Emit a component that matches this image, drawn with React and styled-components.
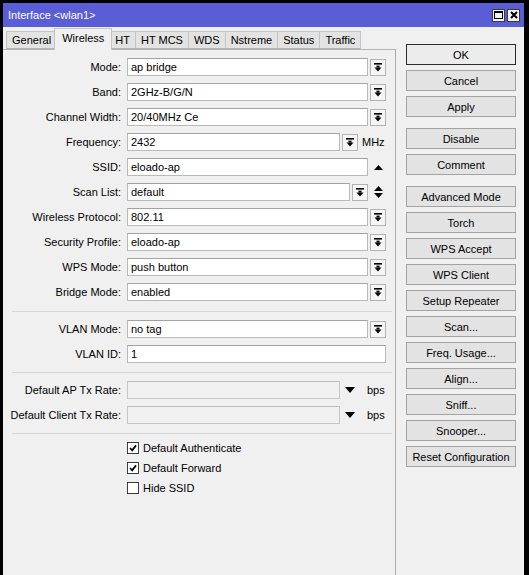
import React from 'react';
import styled, { createGlobalStyle } from 'styled-components';

const GlobalStyle = createGlobalStyle`
  html, body {
    margin: 0;
    padding: 0;
    background: #000;
  }
`;

const Screen = styled.div`
  width: 529px;
  height: 575px;
  box-sizing: border-box;
  padding: 3px 5px 0 3px;
  background: #000;
  font-family: "Liberation Sans", Arial, sans-serif;
  font-size: 11px;
  color: #000;
`;

const Window = styled.div`
  height: 100%;
  display: flex;
  flex-direction: column;
  background: #f0f0f0;
`;

const TitleBar = styled.div`
  height: 24px;
  flex: none;
  display: flex;
  align-items: center;
  justify-content: space-between;
  padding: 0 4px 0 5px;
  background: #5a5ed6;
`;

const TitleText = styled.span`
  color: #fff;
  font-size: 11px;
`;

const TitleButtons = styled.div`
  display: flex;
  gap: 2px;
`;

const TitleButton = styled.div`
  width: 13px;
  height: 13px;
  box-sizing: border-box;
  border: 1px solid #3a3a3a;
  background: #f2f2f2;
  display: flex;
  align-items: center;
  justify-content: center;
`;

const Body = styled.div`
  flex: 1;
  display: flex;
  min-height: 0;
`;

const LeftColumn = styled.div`
  width: 393px;
  flex: none;
  display: flex;
  flex-direction: column;
`;

const TabRow = styled.div`
  height: 21px;
  margin-top: 1px;
  padding-left: 4px;
  display: flex;
  align-items: flex-end;
  position: relative;
  z-index: 1;
`;

const Tab = styled.div`
  box-sizing: border-box;
  height: ${p => (p.$selected ? '22px' : '18px')};
  margin: ${p => (p.$selected ? '0 -2px -1px -3px' : '0 0 0 -1px')};
  padding: ${p => (p.$selected ? '0 7px 3px' : '0 5px')};
  border: 1px solid #c4c4c4;
  border-bottom: ${p => (p.$selected ? 'none' : '1px solid #b4b4b4')};
  background: ${p => (p.$selected ? '#f0f0f0' : '#e3e3e3')};
  display: flex;
  align-items: center;
  white-space: nowrap;
  position: relative;
  z-index: ${p => (p.$selected ? 2 : 0)};
`;

const Pane = styled.div`
  flex: 1;
  border-top: 1px solid #b4b4b4;
  border-right: 1px solid #a8a8a8;
`;

const Section = styled.div`
  display: flex;
  flex-direction: column;
  gap: ${p => p.$gap}px;
  padding: ${p => p.$pt}px 0 ${p => p.$pb}px;
`;

const Divider = styled.div`
  margin: 0 3px 0 9px;
  border-top: 1px solid #d6d6d6;
`;

const Row = styled.div`
  display: grid;
  grid-template-columns: 118px 259px;
  column-gap: 6px;
  align-items: center;
  height: ${p => p.$h || 18}px;
`;

const Label = styled.div`
  text-align: right;
  white-space: nowrap;
`;

const Field = styled.div`
  display: flex;
  align-items: center;
  gap: 2px;
  height: 18px;
`;

const TextBox = styled.div`
  flex: 1;
  min-width: 0;
  height: 18px;
  box-sizing: border-box;
  padding: 0 3px;
  line-height: 16px;
  white-space: nowrap;
  overflow: hidden;
  border: 1px solid ${p => (p.$disabled ? '#c6c6c6' : '#b9b9b9')};
  border-top-color: ${p => (p.$disabled ? '#bdbdbd' : '#a2a2a2')};
  background: ${p => (p.$disabled ? '#f0f0f0' : '#fff')};
`;

const DropButton = styled.div`
  width: 16px;
  height: 17px;
  flex: none;
  box-sizing: border-box;
  border: 1px solid #b3b3b3;
  background: #f6f6f6;
  display: flex;
  align-items: center;
  justify-content: center;
`;

const Suffix = styled.div`
  width: 16px;
  flex: none;
  display: flex;
  align-items: center;
  justify-content: center;
`;

const Unit = styled.div`
  width: 26px;
  flex: none;
  box-sizing: border-box;
  padding-left: ${p => p.$pad}px;
  white-space: nowrap;
`;

const CheckRow = styled.label`
  display: flex;
  align-items: center;
  gap: 4px;
  height: 20px;
  white-space: nowrap;
`;

const CheckBox = styled.span`
  width: 12px;
  height: 12px;
  box-sizing: border-box;
  border: 1px solid #3c3c3c;
  background: #fff;
  display: flex;
  align-items: center;
  justify-content: center;
`;

const ButtonColumn = styled.div`
  flex: 1;
  display: flex;
  flex-direction: column;
  padding: 17px 0 0 10px;
`;

const ActionButton = styled.div`
  width: 110px;
  height: 21px;
  box-sizing: border-box;
  margin-top: ${p => (p.$first ? 0 : p.$group ? 11 : 5)}px;
  border: 1px solid ${p => (p.$default ? '#2b2b2b' : '#a3a3a3')};
  background: ${p => (p.$default ? '#ececec' : '#e3e3e3')};
  display: flex;
  align-items: center;
  justify-content: center;
  white-space: nowrap;
`;

const DropIcon = () => (
  <svg width="8" height="9" viewBox="0 0 8 9">
    <rect x="0" y="0" width="8" height="1.6" fill="#000" />
    <rect x="2.5" y="2.6" width="3" height="2" fill="#000" />
    <polygon points="0.5,4.4 7.5,4.4 4,8.4" fill="#000" />
  </svg>
);

const UpIcon = () => (
  <svg width="9" height="5" viewBox="0 0 9 5">
    <polygon points="0,5 9,5 4.5,0" fill="#000" />
  </svg>
);

const UpDownIcon = () => (
  <svg width="9" height="12" viewBox="0 0 9 12">
    <polygon points="0,5 9,5 4.5,0" fill="#000" />
    <polygon points="0,7 9,7 4.5,12" fill="#000" />
  </svg>
);

const DownIcon = () => (
  <svg width="10" height="6" viewBox="0 0 10 6">
    <polygon points="0,0 10,0 5,6" fill="#000" />
  </svg>
);

const CheckIcon = () => (
  <svg width="8" height="8" viewBox="0 0 8 8">
    <path d="M1 4 L3.2 6.4 L7 1.4" stroke="#000" strokeWidth="1.8" fill="none" />
  </svg>
);

const MaxIcon = () => (
  <svg width="9" height="8" viewBox="0 0 9 8">
    <rect x="0.5" y="0.5" width="8" height="7" stroke="#000" fill="none" />
    <rect x="0" y="0" width="9" height="2" fill="#000" />
  </svg>
);

const CloseIcon = () => (
  <svg width="8" height="8" viewBox="0 0 8 8">
    <path d="M1 1 L7 7 M7 1 L1 7" stroke="#000" strokeWidth="2" />
  </svg>
);

const tabs = ['General', 'Wireless', 'HT', 'HT MCS', 'WDS', 'Nstreme', 'Status', 'Traffic'];

const mainRows = [
  { label: 'Mode', value: 'ap bridge', drop: true },
  { label: 'Band', value: '2GHz-B/G/N', drop: true },
  { label: 'Channel Width', value: '20/40MHz Ce', drop: true },
  { label: 'Frequency', value: '2432', drop: true, unit: 'MHz' },
  { label: 'SSID', value: 'eloado-ap', extra: 'up' },
  { label: 'Scan List', value: 'default', drop: true, extra: 'updown' },
  { label: 'Wireless Protocol', value: '802.11', drop: true },
  { label: 'Security Profile', value: 'eloado-ap', drop: true },
  { label: 'WPS Mode', value: 'push button', drop: true },
  { label: 'Bridge Mode', value: 'enabled', drop: true },
];

const vlanRows = [
  { label: 'VLAN Mode', value: 'no tag', drop: true },
  { label: 'VLAN ID', value: '1' },
];

const rateRows = [
  { label: 'Default AP Tx Rate', value: '', disabled: true, extra: 'down', unit: 'bps' },
  { label: 'Default Client Tx Rate', value: '', disabled: true, extra: 'down', unit: 'bps' },
];

const checks = [
  { label: 'Default Authenticate', on: true },
  { label: 'Default Forward', on: true },
  { label: 'Hide SSID', on: false },
];

const buttons = [
  { text: 'OK', isDefault: true },
  { text: 'Cancel' },
  { text: 'Apply' },
  { text: 'Disable', group: true },
  { text: 'Comment' },
  { text: 'Advanced Mode', group: true },
  { text: 'Torch' },
  { text: 'WPS Accept' },
  { text: 'WPS Client' },
  { text: 'Setup Repeater' },
  { text: 'Scan...' },
  { text: 'Freq. Usage...' },
  { text: 'Align...' },
  { text: 'Sniff...' },
  { text: 'Snooper...' },
  { text: 'Reset Configuration' },
];

const extraIcons = { up: <UpIcon />, updown: <UpDownIcon />, down: <DownIcon /> };

function FieldRow({ row }) {
  return (
    <Row>
      <Label>{row.label}:</Label>
      <Field>
        <TextBox $disabled={row.disabled}>{row.value}</TextBox>
        {row.drop && (
          <DropButton>
            <DropIcon />
          </DropButton>
        )}
        {row.extra && <Suffix>{extraIcons[row.extra]}</Suffix>}
        {row.unit && <Unit $pad={row.disabled ? 7 : 2}>{row.unit}</Unit>}
      </Field>
    </Row>
  );
}

export default function App() {
  return (
    <Screen>
      <GlobalStyle />
      <Window>
        <TitleBar>
          <TitleText>Interface &lt;wlan1&gt;</TitleText>
          <TitleButtons>
            <TitleButton><MaxIcon /></TitleButton>
            <TitleButton><CloseIcon /></TitleButton>
          </TitleButtons>
        </TitleBar>
        <Body>
          <LeftColumn>
            {/* tab strip */}
            <TabRow>
              {tabs.map(t => (
                <Tab key={t} $selected={t === 'Wireless'}>{t}</Tab>
              ))}
            </TabRow>
            <Pane>
              <Section $pt={8} $pb={10} $gap={7}>
                {mainRows.map(r => <FieldRow key={r.label} row={r} />)}
              </Section>
              <Divider />
              <Section $pt={8} $pb={9} $gap={7}>
                {vlanRows.map(r => <FieldRow key={r.label} row={r} />)}
              </Section>
              <Divider />
              <Section $pt={8} $pb={9} $gap={7}>
                {rateRows.map(r => <FieldRow key={r.label} row={r} />)}
              </Section>
              <Divider />
              <Section $pt={4} $pb={0} $gap={0}>
                {checks.map(c => (
                  <Row key={c.label} $h={20}>
                    <span />
                    <CheckRow>
                      <CheckBox>{c.on && <CheckIcon />}</CheckBox>
                      {c.label}
                    </CheckRow>
                  </Row>
                ))}
              </Section>
            </Pane>
          </LeftColumn>
          <ButtonColumn>
            {buttons.map((b, i) => (
              <ActionButton key={b.text} $first={i === 0} $group={b.group} $default={b.isDefault}>
                {b.text}
              </ActionButton>
            ))}
          </ButtonColumn>
        </Body>
      </Window>
    </Screen>
  );
}
